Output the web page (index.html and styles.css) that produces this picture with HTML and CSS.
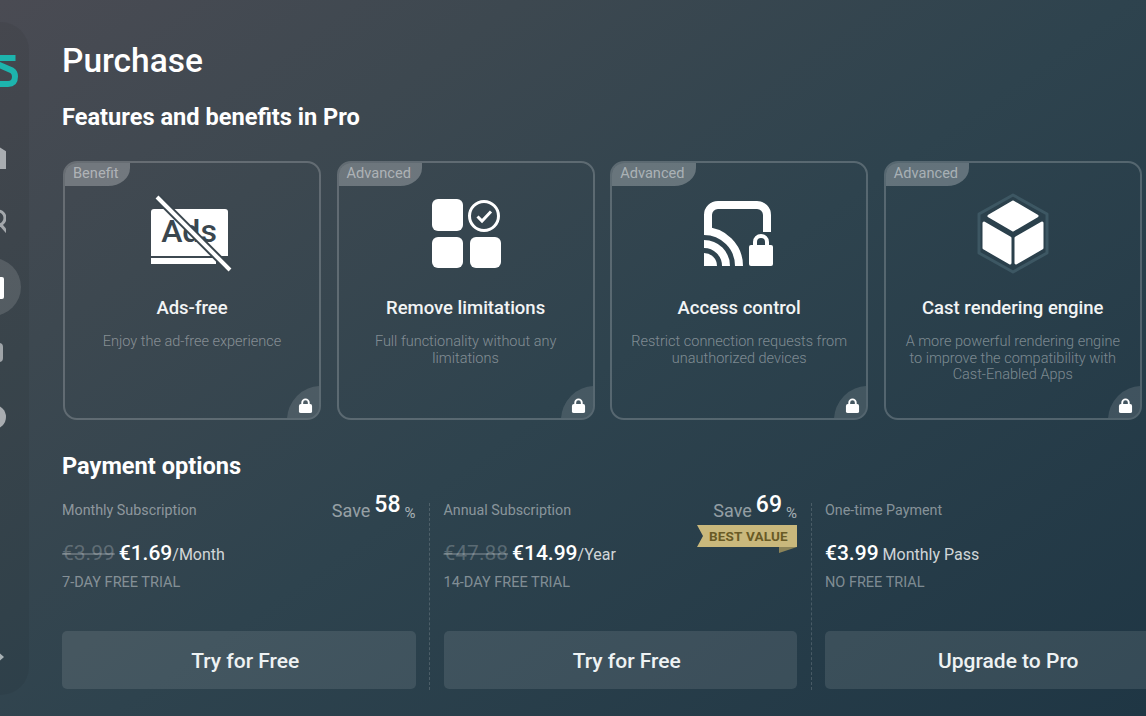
FILE: index.html
```html
<!DOCTYPE html>
<html lang="en">
<head>
    <meta charset="UTF-8">
    <meta name="viewport" content="width=device-width, initial-scale=1.0">
    <title>Purchase</title>
    <link rel="stylesheet" href="styles.css">
</head>
<body>
    <svg class="defs" width="0" height="0">
        <symbol id="lock" viewBox="0 0 16 16">
            <path d="M4.500 7V5a3.500 3.500 0 0 1 7 0v2" fill="none" stroke="#fff" stroke-width="2"/>
            <rect x="1" y="6.500" width="14" height="9.500" rx="2" fill="#fff"/>
        </symbol>
    </svg>
    <div id="container">
        <aside class="sidebar">
            <svg class="logo" width="20" height="32" viewBox="0 0 20 32">
                <path d="M15.500 3H0M-3 9L12 15.500Q15 17.500 15 21.500Q15 29 8 29H0" fill="none" stroke="#1db4ad" stroke-width="6"/>
            </svg>
            <div class="nav-item">
                <svg width="28" height="28" viewBox="0 0 28 28"><path d="M18 2L29 9V26H14V11H8Z" fill="#a9adb1"/></svg>
            </div>
            <div class="nav-item">
                <svg width="28" height="28" viewBox="0 0 28 28"><circle cx="20" cy="10" r="7" fill="none" stroke="#a3a7ab" stroke-width="3"/><path d="M23 17L29 24" stroke="#a3a7ab" stroke-width="3"/></svg>
            </div>
            <div class="nav-item active">
                <svg width="28" height="28" viewBox="0 0 28 28"><rect x="2" y="4" width="24" height="22" rx="2" fill="#fff"/></svg>
            </div>
            <div class="nav-item">
                <svg width="28" height="28" viewBox="0 0 28 28"><rect x="3" y="5" width="22" height="19" rx="4" fill="#9fa4a8"/></svg>
            </div>
            <div class="nav-item">
                <svg width="28" height="28" viewBox="0 0 28 28"><circle cx="16" cy="14" r="12" fill="#a9adb1"/></svg>
            </div>
            <div class="nav-item last">
                <svg width="28" height="28" viewBox="0 0 28 28"><path d="M18 7L26 14L18 21L8 14Z" fill="#a9b2b6"/></svg>
            </div>
        </aside>

        <main class="content">
            <h1>Purchase</h1>
            <h2>Features and benefits in Pro</h2>

            <div class="cards">
                <div class="card">
                    <span class="tag">Benefit</span>
                    <svg class="card-icon" width="80" height="80" viewBox="0 0 80 80">
                        <path d="M-1 19Q-1 16 2 16H73Q76 16 76 19V63H-1Z" fill="#fff"/>
                        <text class="ads-text" x="37" y="49" text-anchor="middle">Ads</text>
                        <path d="M-1 65H64V71H-1Z" fill="#fff"/>
                        <path d="M5 4L78 77" stroke="#3a464e" stroke-width="8"/>
                        <path d="M5 4L78 77" stroke="#fff" stroke-width="4"/>
                    </svg>
                    <h3>Ads-free</h3>
                    <p>Enjoy the ad-free experience</p>
                    <span class="corner"><svg width="15" height="15"><use href="#lock"/></svg></span>
                </div>
                <div class="card">
                    <span class="tag">Advanced</span>
                    <svg class="card-icon" width="80" height="80" viewBox="0 0 80 80">
                        <rect x="6" y="6" width="31" height="32" rx="6" fill="#fff"/>
                        <rect x="6" y="44" width="31" height="31" rx="6" fill="#fff"/>
                        <rect x="44" y="44" width="31" height="31" rx="6" fill="#fff"/>
                        <circle cx="58" cy="23" r="14.500" fill="none" stroke="#fff" stroke-width="3"/>
                        <path d="M51.500 23.500L56 28L65 18.500" fill="none" stroke="#fff" stroke-width="3"/>
                    </svg>
                    <h3>Remove limitations</h3>
                    <p>Full functionality without any limitations</p>
                    <span class="corner"><svg width="15" height="15"><use href="#lock"/></svg></span>
                </div>
                <div class="card">
                    <span class="tag">Advanced</span>
                    <svg class="card-icon" width="80" height="80" viewBox="0 0 80 80">
                        <path d="M9 35V22a10 10 0 0 1 10-10H58a10 10 0 0 1 10 10V39" fill="none" stroke="#fff" stroke-width="8"/>
                        <path d="M5 60a13 13 0 0 1 13 13H5Z" fill="#fff"/>
                        <path d="M5 51A22 22 0 0 1 27 73" fill="none" stroke="#fff" stroke-width="8"/>
                        <path d="M5 38A35 35 0 0 1 40 73" fill="none" stroke="#fff" stroke-width="8"/>
                        <path d="M56 53V49a6 6 0 0 1 12 0V53" fill="none" stroke="#fff" stroke-width="4"/>
                        <rect x="50" y="52" width="24" height="21" rx="2" fill="#fff"/>
                    </svg>
                    <h3>Access control</h3>
                    <p>Restrict connection requests from unauthorized devices</p>
                    <span class="corner"><svg width="15" height="15"><use href="#lock"/></svg></span>
                </div>
                <div class="card">
                    <span class="tag">Advanced</span>
                    <svg class="card-icon" width="80" height="80" viewBox="0 0 80 80">
                        <path d="M40 2L74 21V60L40 79L6 60V21Z" fill="none" stroke="#3d5763" stroke-width="3" stroke-linejoin="round"/>
                        <g fill="#fff" stroke="#fff" stroke-width="3" stroke-linejoin="round">
                            <path d="M16 23L40 9L64 23L40 37Z"/>
                            <path d="M11 30L37 45V70L11 55Z"/>
                            <path d="M43 45L69 30V55L43 70Z"/>
                        </g>
                    </svg>
                    <h3>Cast rendering engine</h3>
                    <p>A more powerful rendering engine to improve the compatibility with Cast-Enabled Apps</p>
                    <span class="corner"><svg width="15" height="15"><use href="#lock"/></svg></span>
                </div>
            </div>

            <h2 class="payment-title">Payment options</h2>

            <div class="plans">
                <div class="plan">
                    <div class="plan-head">
                        <span class="plan-name">Monthly Subscription</span>
                        <span class="save">Save<b>58</b><i>%</i></span>
                    </div>
                    <div class="price"><s>€3.99</s> <strong>€1.69</strong><span>/Month</span></div>
                    <div class="trial">7-DAY FREE TRIAL</div>
                    <button>Try for Free</button>
                </div>
                <div class="plan-line"></div>
                <div class="plan">
                    <div class="plan-head">
                        <span class="plan-name">Annual Subscription</span>
                        <span class="save">Save<b>69</b><i>%</i></span>
                    </div>
                    <div class="badge"><span>BEST VALUE</span></div>
                    <div class="price"><s>€47.88</s> <strong>€14.99</strong><span>/Year</span></div>
                    <div class="trial">14-DAY FREE TRIAL</div>
                    <button>Try for Free</button>
                </div>
                <div class="plan-line"></div>
                <div class="plan">
                    <div class="plan-head">
                        <span class="plan-name">One-time Payment</span>
                    </div>
                    <div class="price"><strong>€3.99</strong> <span>Monthly Pass</span></div>
                    <div class="trial">NO FREE TRIAL</div>
                    <button>Upgrade to Pro</button>
                </div>
            </div>
        </main>
    </div>
</body>
</html>
```

FILE: styles.css
```css
* {
    margin: 0;
    padding: 0;
    box-sizing: border-box;
}
html, body {
    width: 100%;
    height: 100%;
    overflow: hidden;
}
body {
    font-family: "Roboto", "Liberation Sans", sans-serif;
    color: #ffffff;
    background: linear-gradient(145deg, #4a4b53 0%, #3d4850 24%, #2e434e 52%, #1f3644 100%);
}
.defs {
    display: block;
    height: 0;
}
#container {
    display: flex;
    width: 100%;
    height: 716px;
    overflow: hidden;
}

/* sidebar, cut off by the left edge */
.sidebar {
    flex: none;
    display: flex;
    flex-direction: column;
    gap: 7px;
    width: 29px;
    margin: 22px 0 21px;
    padding-top: 33px;
    overflow: hidden;
    border-radius: 0 28px 28px 0;
    background-color: rgba(0, 0, 0, .05);
}
.logo {
    display: block;
    flex: none;
    margin-bottom: 34px;
}
.nav-item {
    flex: none;
    display: flex;
    align-items: center;
    justify-content: center;
    width: 58px;
    height: 58px;
    margin-left: -37px;
    border-radius: 50%;
}
.nav-item.active {
    background-color: rgba(255, 255, 255, .13);
}
.nav-item.last {
    margin-top: auto;
    margin-bottom: 9px;
}

.content {
    flex: 1;
    min-width: 0;
    padding: 40px 0 0 33px;
}
h1 {
    height: 42px;
    font-size: 33.500px;
    font-weight: 500;
    line-height: 42px;
}
h2 {
    height: 30px;
    margin-top: 20px;
    font-size: 23.600px;
    font-weight: 700;
    line-height: 30px;
}

/* feature cards */
.cards {
    display: flex;
    gap: 15.6px;
    margin: 29px 0 0 1px;
}
.card {
    flex: none;
    position: relative;
    width: 258px;
    height: 259px;
    padding: 30px 14px 0;
    overflow: hidden;
    text-align: center;
    border: 2px solid rgba(255, 255, 255, .2);
    border-radius: 14px;
}
.tag {
    position: absolute;
    top: -2px;
    left: -2px;
    height: 25px;
    padding: 0 11px 0 10px;
    font-size: 14.600px;
    line-height: 25px;
    text-align: left;
    color: rgba(255, 255, 255, .45);
    background-color: rgba(255, 255, 255, .26);
    border-radius: 0 0 22px 0 / 0 0 18px 0;
}
.card-icon {
    display: block;
    margin: 0 auto;
    overflow: visible;
}
.ads-text {
    font-size: 32px;
    font-weight: 500;
    fill: #3a464e;
}
.card h3 {
    margin-top: 20px;
    font-size: 18.500px;
    font-weight: 500;
    line-height: 30px;
    color: #f2f4f5;
}
.card p {
    margin-top: 11px;
    padding: 0 4px;
    font-size: 14.500px;
    font-weight: 300;
    line-height: 16.500px;
    color: rgba(255, 255, 255, .4);
}
.corner {
    position: absolute;
    right: -2px;
    bottom: -2px;
    display: flex;
    align-items: center;
    justify-content: center;
    width: 34px;
    height: 34px;
    padding: 4px 0 0 2px;
    background-color: rgba(255, 255, 255, .12);
    border-radius: 100% 0 0 0;
}
.corner svg {
    display: block;
}

/* payment options */
.payment-title {
    margin-top: 31px;
}
.plans {
    display: flex;
    margin-top: 12px;
    height: 197px;
}
.plan {
    flex: none;
    position: relative;
    display: flex;
    flex-direction: column;
    width: 353.500px;
    height: 196px;
}
.plan-line {
    flex: none;
    width: 1px;
    margin: 10px 13.500px 0;
    border-left: 1px dashed rgba(255, 255, 255, .16);
}
.plan-head {
    display: flex;
    justify-content: space-between;
    align-items: flex-start;
    height: 28px;
}
.plan-name {
    margin-top: 10px;
    font-size: 14.300px;
    line-height: 14px;
    color: rgba(255, 255, 255, .45);
}
.save {
    display: flex;
    align-items: flex-end;
    height: 28px;
    font-size: 18px;
    line-height: 20px;
    color: rgba(255, 255, 255, .5);
}
.save b {
    margin: 0 4px 4px 4px;
    font-size: 23px;
    font-weight: 500;
    line-height: 24px;
    color: #ffffff;
}
.save i {
    font-size: 15px;
    font-style: normal;
    line-height: 16px;
    color: rgba(255, 255, 255, .6);
}
.badge {
    position: absolute;
    top: 32px;
    right: 0;
    width: 100px;
    height: 28px;
}
.badge span {
    display: block;
    height: 22px;
    padding-left: 12px;
    font-size: 13.500px;
    font-weight: 700;
    line-height: 22px;
    letter-spacing: .2px;
    color: #695b26;
    background-color: #c9b87c;
    clip-path: polygon(0 0, 100% 0, 100% 100%, 0 100%, 6% 50%);
}
.badge::after {
    content: "";
    display: block;
    width: 18px;
    height: 6px;
    margin-left: 82px;
    background-color: #8c8459;
    clip-path: polygon(0 0, 100% 0, 0 100%);
}
.price {
    height: 26px;
    margin-top: 19px;
    font-size: 16px;
    line-height: 26px;
    color: rgba(255, 255, 255, .8);
}
.price s {
    font-size: 21px;
    color: rgba(255, 255, 255, .22);
}
.price strong {
    font-size: 21px;
    font-weight: 500;
    color: #ffffff;
}
.trial {
    margin-top: 9px;
    font-size: 14.500px;
    line-height: 16px;
    color: rgba(255, 255, 255, .42);
}
button {
    width: 100%;
    height: 58px;
    margin-top: auto;
    padding: 2px 0 0 13px;
    outline: 0;
    border: 0;
    border-radius: 5px;
    font-family: inherit;
    font-size: 21px;
    font-weight: 500;
    color: #eef2f3;
    background-color: rgba(255, 255, 255, .1);
    cursor: pointer;
}
```
